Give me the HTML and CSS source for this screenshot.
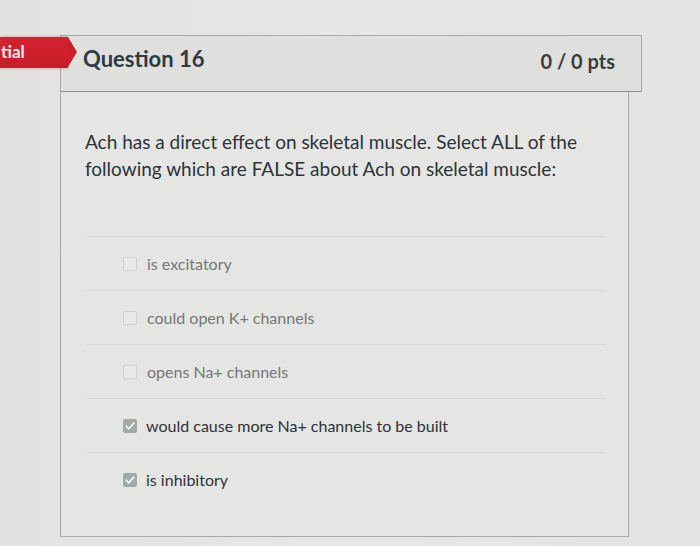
FILE: index.html
```html
<!DOCTYPE html>
<html>
<head>
<meta charset="utf-8">
<link rel="stylesheet" href="styles.css">
</head>
<body>
<div class="page">
  <div class="badge"><span class="badge-text">tial</span></div>
  <div class="card">
    <div class="card-header">
      <h2 class="q-title">Question 16</h2>
      <span class="q-pts">0 / 0 pts</span>
    </div>
    <div class="card-body">
      <p class="q-text">Ach has a direct effect on skeletal muscle. Select ALL of the following which are FALSE about Ach on skeletal muscle:</p>
      <ul class="answers">
        <li class="answer"><span class="box"></span><span class="label">is excitatory</span></li>
        <li class="answer"><span class="box"></span><span class="label">could open K+ channels</span></li>
        <li class="answer"><span class="box"></span><span class="label">opens Na+ channels</span></li>
        <li class="answer selected"><span class="box checked"><svg viewBox="0 0 14 14" width="14" height="14"><path d="M3.2 7.2 L5.8 9.8 L10.8 4.2" fill="none" stroke="#f4f5f3" stroke-width="1.8" stroke-linecap="round" stroke-linejoin="round"/></svg></span><span class="label">would cause more Na+ channels to be built</span></li>
        <li class="answer selected"><span class="box checked"><svg viewBox="0 0 14 14" width="14" height="14"><path d="M3.2 7.2 L5.8 9.8 L10.8 4.2" fill="none" stroke="#f4f5f3" stroke-width="1.8" stroke-linecap="round" stroke-linejoin="round"/></svg></span><span class="label">is inhibitory</span></li>
      </ul>
    </div>
  </div>
</div>
</body>
</html>
```

FILE: styles.css
```css
html, body {
  margin: 0;
  padding: 0;
}
body {
  width: 700px;
  height: 546px;
  overflow: hidden;
  background: linear-gradient(90deg, #e2e3e0 0%, #e6e7e4 50%, #e3e4e1 100%);
  font-family: Lato, "Open Sans", sans-serif;
  color: #2f3438;
}
.page {
  position: relative;
  padding: 35px 0 0 60px;
}
.badge {
  position: absolute;
  left: 0;
  top: 37px;
  width: 68px;
  height: 31px;
  background: linear-gradient(180deg, #d4222f 0%, #c81d2a 100%);
  box-shadow: 0 0 3px rgba(220, 80, 90, 0.6);
}
.badge::after {
  content: "";
  position: absolute;
  right: -9px;
  top: 0;
  border-left: 9px solid #cc1f2c;
  border-top: 15.5px solid transparent;
  border-bottom: 15.5px solid transparent;
}
.badge-text {
  position: absolute;
  left: 1px;
  top: 4px;
  color: #f7eeee;
  font-weight: 700;
  font-size: 17px;
}
.card {
  width: 582px;
}
.card-header {
  height: 57px;
  box-sizing: border-box;
  display: flex;
  align-items: flex-start;
  justify-content: space-between;
  padding: 10px 26px 0 22px;
  background: #dfe0dd;
  border: 1px solid #a9aaa7;
  border-bottom: 1px solid #8f908d;
}
.q-title {
  margin: 0;
  font-size: 22px;
  line-height: 26px;
  font-weight: 700;
  color: #2e3a42;
}
.q-pts {
  margin-top: 2px;
  font-size: 20px;
  line-height: 26px;
  font-weight: 700;
  color: #3a3d40;
}
.card-body {
  width: 566px;
  height: 444px;
  border: 1px solid #a9aaa7;
  border-top: none;
  background: #e5e6e3;
  padding: 0 0 0 1px;
}
.q-text {
  margin: 0;
  padding: 36px 40px 0 23px;
  font-size: 19px;
  line-height: 27px;
  color: #2c3339;
}
.answers {
  list-style: none;
  margin: 54px 0 0 24px;
  padding: 0;
  width: 520px;
}
.answer {
  height: 53px;
  display: flex;
  align-items: center;
  padding-left: 37px;
  border-top: 1px solid #d6d7d4;
  font-size: 16px;
  color: #737677;
}
.answer.selected {
  color: #2e3338;
}
.box {
  width: 12px;
  height: 12px;
  border: 1px solid #cfd0cd;
  border-radius: 2px;
  background: #e9eae7;
  margin-right: 10px;
  display: flex;
  align-items: center;
  justify-content: center;
}
.box.checked {
  width: 14px;
  height: 14px;
  border: none;
  background: #a3a8a8;
  margin-right: 9px;
}
.label {
  white-space: nowrap;
}
```
